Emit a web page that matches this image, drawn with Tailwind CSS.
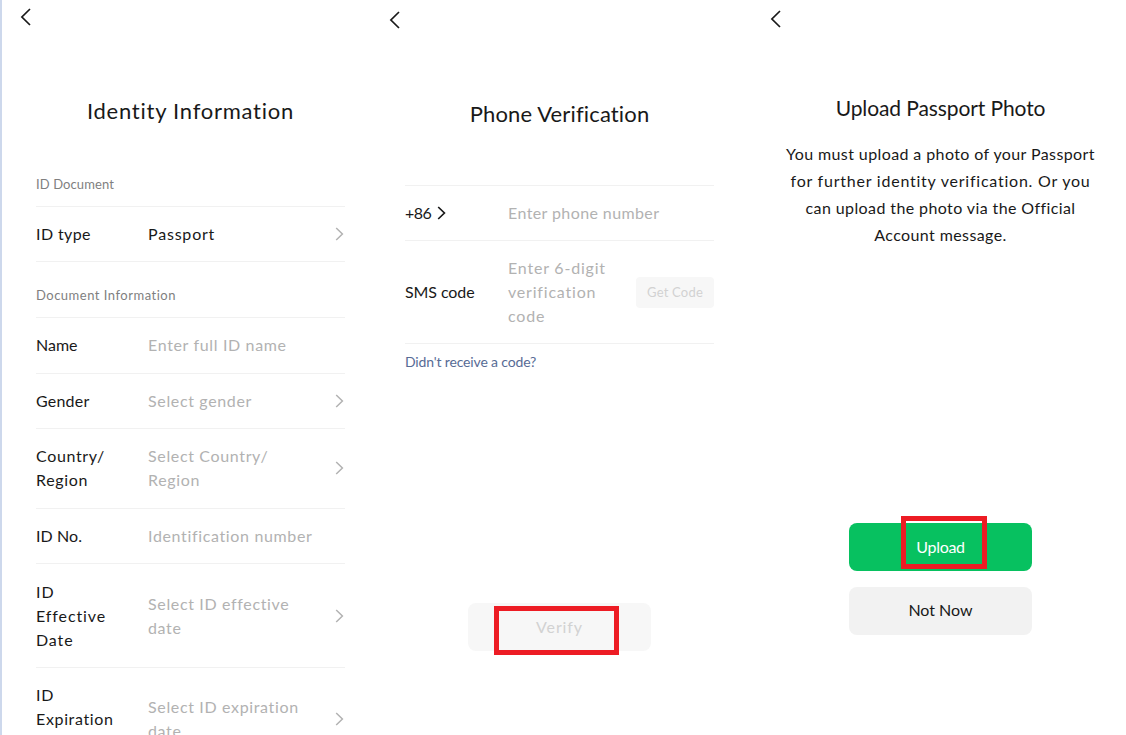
<!DOCTYPE html>
<html lang="en">
  <head>
    <meta charset="UTF-8" />
    <meta name="viewport" content="width=device-width, initial-scale=1.0" />
    <title>Identity Verification</title>
    <script src="https://cdn.jsdelivr.net/npm/@tailwindcss/browser@4"></script>
  </head>
  <body class="bg-white text-[#191919] font-['Lato',sans-serif]">
    <div class="flex w-[1126px] h-[735px] overflow-hidden">
      <!-- Identity information -->
      <section class="w-[375px] h-full shrink-0 border-l-2 border-[#cdd8ec] pl-[34px] pr-[30px]">
        <header class="-ml-[17px] h-[90px] pt-2">
          <svg class="w-[12px] h-[18px]" viewBox="0 0 12 18" fill="none" stroke="#191919" stroke-width="1.7"><path d="M11 1L2.9 9L11 17" /></svg>
        </header>
        <h1 class="h-[84px] pt-[5px] text-center text-[22px] leading-8 tracking-[0.75px] whitespace-nowrap">Identity Information</h1>
        <h2 class="h-8 text-[13px] leading-5 tracking-[0.1px] text-[#7f7f7f]">ID Document</h2>
        <div class="flex items-center border-y border-[#f1f1f1] py-[15px] text-base leading-6">
          <span class="w-[112px] tracking-[0.4px]">ID type</span>
          <span class="flex-1 tracking-[0.8px]">Passport</span>
          <svg class="w-[10px] h-[14px]" viewBox="0 0 10 14" fill="none" stroke="#b2b2b2" stroke-width="1.5"><path d="M1.2 1L7.4 7L1.2 13" /></svg>
        </div>
        <h2 class="h-[55px] pt-[23px] text-[13px] leading-5 tracking-[0.5px] text-[#7f7f7f]">Document Information</h2>
        <div class="text-base leading-6 tracking-[0.65px]">
          <div class="flex items-center border-t border-[#f1f1f1] py-[15.3px]">
            <span class="w-[112px] tracking-[0px]">Name</span>
            <span class="flex-1 text-[#b2b2b2]">Enter full ID name</span>
          </div>
          <div class="flex items-center border-t border-[#f1f1f1] py-[15.3px]">
            <span class="w-[112px] tracking-[0.2px]">Gender</span>
            <span class="flex-1 text-[#b2b2b2]">Select gender</span>
            <svg class="w-[10px] h-[14px]" viewBox="0 0 10 14" fill="none" stroke="#b2b2b2" stroke-width="1.5"><path d="M1.2 1L7.4 7L1.2 13" /></svg>
          </div>
          <div class="flex items-center border-t border-[#f1f1f1] py-[15.3px]">
            <span class="w-[112px]">Country/<br />Region</span>
            <span class="flex-1 text-[#b2b2b2]">Select Country/<br />Region</span>
            <svg class="w-[10px] h-[14px]" viewBox="0 0 10 14" fill="none" stroke="#b2b2b2" stroke-width="1.5"><path d="M1.2 1L7.4 7L1.2 13" /></svg>
          </div>
          <div class="flex items-center border-t border-[#f1f1f1] py-[15.3px]">
            <span class="w-[112px] tracking-[0.1px]">ID No.</span>
            <span class="flex-1 text-[#b2b2b2]">Identification number</span>
          </div>
          <div class="flex items-center border-t border-[#f1f1f1] py-[15.3px]">
            <span class="w-[112px] tracking-[0.9px]">ID<br />Effective<br />Date</span>
            <span class="flex-1 text-[#b2b2b2]">Select ID effective<br />date</span>
            <svg class="w-[10px] h-[14px]" viewBox="0 0 10 14" fill="none" stroke="#b2b2b2" stroke-width="1.5"><path d="M1.2 1L7.4 7L1.2 13" /></svg>
          </div>
          <div class="flex items-center border-t border-[#f1f1f1] py-[15.3px]">
            <span class="w-[112px]">ID<br />Expiration<br />Date</span>
            <span class="flex-1 text-[#b2b2b2]">Select ID expiration<br />date</span>
            <svg class="w-[10px] h-[14px]" viewBox="0 0 10 14" fill="none" stroke="#b2b2b2" stroke-width="1.5"><path d="M1.2 1L7.4 7L1.2 13" /></svg>
          </div>
        </div>
      </section>

      <!-- Phone verification -->
      <section class="w-[375px] h-full shrink-0 pl-[30px] pr-9">
        <header class="-ml-[17px] h-[93px] pt-[11px]">
          <svg class="w-[12px] h-[18px]" viewBox="0 0 12 18" fill="none" stroke="#191919" stroke-width="1.7"><path d="M11 1L2.9 9L11 17" /></svg>
        </header>
        <h1 class="h-[92px] pt-[5px] text-center text-[22px] leading-8 tracking-[0.15px]">Phone Verification</h1>
        <div class="border-y border-[#f1f1f1] text-base leading-6 tracking-[0.4px]">
          <div class="flex items-center py-[15px]">
            <span class="flex items-center gap-1.5 w-[103px] tracking-[-0.5px]">+86
              <svg class="w-[10px] h-[14px]" viewBox="0 0 10 14" fill="none" stroke="#191919" stroke-width="1.7"><path d="M1.2 1L7.4 7L1.2 13" /></svg>
            </span>
            <span class="flex-1 text-[#b2b2b2]">Enter phone number</span>
          </div>
          <div class="flex items-center border-t border-[#f1f1f1] py-[15px]">
            <span class="w-[103px] tracking-[-0.1px]">SMS code</span>
            <span class="flex-1 text-[#b2b2b2] tracking-[0.8px]">Enter 6-digit<br />verification<br />code</span>
            <button class="w-[78px] h-[31px] rounded bg-[#f7f7f7] text-[13px] leading-5 tracking-[0.2px] text-[#d2d2d2]">Get Code</button>
          </div>
        </div>
        <a href="#" class="mt-2 block text-[14px] leading-5 tracking-[-0.15px] text-[#576b95]">Didn't receive a code?</a>
        <div class="relative mt-[231px] mx-auto w-[183px]">
          <button class="w-full h-12 rounded-lg bg-[#f7f7f7] text-base tracking-[0.9px] text-[#d2d2d2]">Verify</button>
          <div class="absolute left-[26px] top-[3px] w-[125px] h-[49px] border-5 border-[#ed1c24]"></div>
        </div>
      </section>

      <!-- Upload passport photo -->
      <section class="w-[376px] h-full shrink-0 pl-[36px] pr-[31px]">
        <header class="-ml-[17px] h-[87px] pt-2.5">
          <svg class="w-[12px] h-[18px]" viewBox="0 0 12 18" fill="none" stroke="#191919" stroke-width="1.7"><path d="M11 1L2.9 9L11 17" /></svg>
        </header>
        <h1 class="h-[53px] pt-[5px] text-center text-[21px] leading-8 tracking-[-0.1px] whitespace-nowrap">Upload Passport Photo</h1>
        <p class="text-center text-base leading-[27px] tracking-[0.4px] whitespace-nowrap">
          You must upload a photo of your Passport<br />
          <span class="tracking-[0.77px]">for further identity verification. Or you</span><br />
          can upload the photo via the Official<br />
          Account message.
        </p>
        <div class="relative mt-[275px] mx-auto w-[183px]">
          <button class="block w-full h-12 rounded-lg bg-[#07c160] text-base tracking-[-0.3px] text-white">Upload</button>
          <div class="absolute left-[52px] -top-[7px] w-[86px] h-[53px] border-5 border-[#ed1c24]"></div>
          <button class="mt-[15.5px] block w-full h-12 rounded-lg bg-[#f2f2f2] pb-0.5 text-base tracking-[0px]">Not Now</button>
        </div>
      </section>
    </div>
  </body>
</html>
